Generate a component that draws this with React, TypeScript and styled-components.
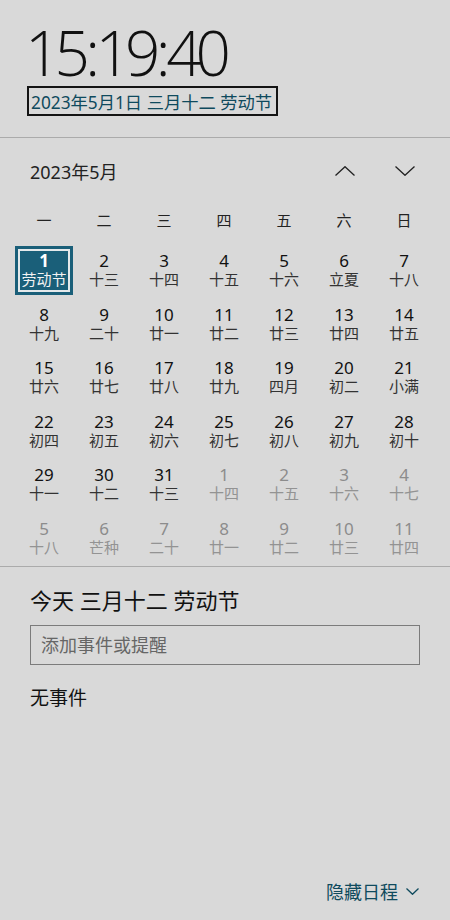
import styled, { createGlobalStyle } from "styled-components";

const GlobalStyle = createGlobalStyle`
    html, body {
        margin: 0;
        padding: 0;
        background: #d9d9d9;
    }
    * {
        box-sizing: border-box;
    }
`;

const FONT = `"Noto Sans", "Noto Sans CJK SC", sans-serif`;
const TEAL = "#1a5f79";
const LINK = "#0f4a5d";

const Panel = styled.div`
    width: 450px;
    height: 920px;
    background: #d9d9d9;
    font-family: ${FONT};
    color: #111;
    display: flex;
    flex-direction: column;
    overflow: hidden;
`;

const Header = styled.header`
    padding: 21px 28px 21px 27px;
    display: flex;
    flex-direction: column;
    align-items: flex-start;
`;

const Clock = styled.div`
    font-family: "Open Sans", "Noto Sans", sans-serif;
    font-weight: 300;
    font-size: 62px;
    line-height: 62px;
    letter-spacing: -6px;
    margin-left: -2px;
    color: #111;
`;

const Colon = styled.span`
    margin: 0 1.5px;
`;

const DateLink = styled.div`
    margin-top: 3px;
    border: 2px solid #141414;
    height: 30px;
    padding: 0 4px 0 2px;
    display: flex;
    align-items: center;
    font-size: 17.3px;
    color: ${LINK};
`;

const Divider = styled.div`
    height: 1px;
    background: #ababab;
`;

const Calendar = styled.section`
    padding: 18px 16px 1px 14px;
`;

const MonthBar = styled.div`
    height: 30px;
    display: flex;
    align-items: center;
    justify-content: space-between;
    padding-left: 16px;
    font-size: 18px;
    color: #222;
`;

const Arrows = styled.div`
    display: flex;
    gap: 40px;
    padding-right: 19px;
`;

const ArrowButton = styled.button`
    width: 20px;
    height: 20px;
    padding: 0;
    border: none;
    background: none;
    display: flex;
    align-items: center;
    justify-content: center;
`;

const WeekRow = styled.div`
    display: grid;
    grid-template-columns: repeat(7, 60px);
    margin-top: 18px;
`;

const Weekday = styled.div`
    height: 30px;
    display: flex;
    align-items: center;
    justify-content: center;
    font-size: 15px;
    color: #222;
`;

const Grid = styled.div`
    margin-top: 10px;
    display: grid;
    grid-template-columns: repeat(7, 60px);
    grid-auto-rows: 53.5px;
`;

const Cell = styled.div<{ $muted: boolean; $selected: boolean }>`
    margin: 2px 1px 3px 1px;
    display: flex;
    flex-direction: column;
    align-items: center;
    justify-content: center;
    background: ${(p) => (p.$selected ? TEAL : "transparent")};
    box-shadow: ${(p) =>
        p.$selected ? `inset 0 0 0 3px ${TEAL}, inset 0 0 0 5px #e4e9eb` : "none"};
    color: ${(p) => (p.$selected ? "#fff" : p.$muted ? "#8c8c8c" : "#111")};
`;

const DayNum = styled.span<{ $bold: boolean }>`
    font-size: 17px;
    line-height: 18px;
    font-weight: ${(p) => (p.$bold ? 700 : 400)};
`;

const Lunar = styled.span<{ $muted: boolean; $selected: boolean }>`
    font-size: 15px;
    line-height: 18px;
    color: ${(p) => (p.$selected ? "#f2f2f2" : p.$muted ? "#939393" : "#333")};
`;

const Agenda = styled.section`
    padding: 18px 30px 0 30px;
    display: flex;
    flex-direction: column;
`;

const Today = styled.div`
    font-size: 22px;
    line-height: 30px;
    color: #111;
`;

const EventInput = styled.input`
    margin-top: 10px;
    width: 390px;
    height: 40px;
    border: 1px solid #7c7c7c;
    background: transparent;
    padding: 0 10px;
    font-family: ${FONT};
    font-size: 18px;
    color: #111;
    outline: none;

    &::placeholder {
        color: #666;
    }
`;

const NoEvents = styled.div`
    margin-top: 20px;
    font-size: 19px;
    line-height: 26px;
    color: #111;
`;

const Footer = styled.footer`
    margin-top: auto;
    padding: 0 31px 16px 0;
    display: flex;
    justify-content: flex-end;
`;

const HideLink = styled.div`
    display: flex;
    align-items: center;
    gap: 8px;
    font-size: 18px;
    color: ${LINK};
`;

const weekdays = ["一", "二", "三", "四", "五", "六", "日"];

const may = [
    "劳动节", "十三", "十四", "十五", "十六", "立夏", "十八",
    "十九", "二十", "廿一", "廿二", "廿三", "廿四", "廿五",
    "廿六", "廿七", "廿八", "廿九", "四月", "初二", "小满",
    "初四", "初五", "初六", "初七", "初八", "初九", "初十",
    "十一", "十二", "十三",
];

const june = ["十四", "十五", "十六", "十七", "十八", "芒种", "二十", "廿一", "廿二", "廿三", "廿四"];

type Day = { n: number; lunar: string; muted: boolean };

const days: Day[] = [
    ...may.map((l, i) => ({ n: i + 1, lunar: l, muted: false })),
    ...june.map((l, i) => ({ n: i + 1, lunar: l, muted: true })),
];

function Chevron({ up, w, h, color }: { up?: boolean; w: number; h: number; color: string }) {
    return (
        <svg width={w} height={h} viewBox={`0 0 ${w} ${h}`} fill="none">
            <path
                d={up ? `M0.5 ${h - 0.5} L${w / 2} 0.7 L${w - 0.5} ${h - 0.5}` : `M0.5 0.5 L${w / 2} ${h - 0.7} L${w - 0.5} 0.5`}
                stroke={color}
                strokeWidth="1.3"
            />
        </svg>
    );
}

export default function App() {
    return (
        <>
            <GlobalStyle />
            <Panel>
                <Header>
                    <Clock>
                        15<Colon>:</Colon>19<Colon>:</Colon>40
                    </Clock>
                    <DateLink>2023年5月1日 三月十二 劳动节</DateLink>
                </Header>
                <Divider />
                <Calendar>
                    <MonthBar>
                        <span>2023年5月</span>
                        <Arrows>
                            <ArrowButton>
                                <Chevron up w={20} h={10} color="#222" />
                            </ArrowButton>
                            <ArrowButton>
                                <Chevron w={20} h={10} color="#222" />
                            </ArrowButton>
                        </Arrows>
                    </MonthBar>
                    <WeekRow>
                        {weekdays.map((d) => (
                            <Weekday key={d}>{d}</Weekday>
                        ))}
                    </WeekRow>
                    <Grid>
                        {days.map((d, i) => {
                            const selected = i === 0;
                            return (
                                <Cell key={i} $muted={d.muted} $selected={selected}>
                                    <DayNum $bold={selected}>{d.n}</DayNum>
                                    <Lunar $muted={d.muted} $selected={selected}>
                                        {d.lunar}
                                    </Lunar>
                                </Cell>
                            );
                        })}
                    </Grid>
                </Calendar>
                <Divider />
                <Agenda>
                    <Today>今天 三月十二 劳动节</Today>
                    <EventInput placeholder="添加事件或提醒" />
                    <NoEvents>无事件</NoEvents>
                </Agenda>
                <Footer>
                    <HideLink>
                        <span>隐藏日程</span>
                        <Chevron w={13} h={7} color={LINK} />
                    </HideLink>
                </Footer>
            </Panel>
        </>
    );
}
